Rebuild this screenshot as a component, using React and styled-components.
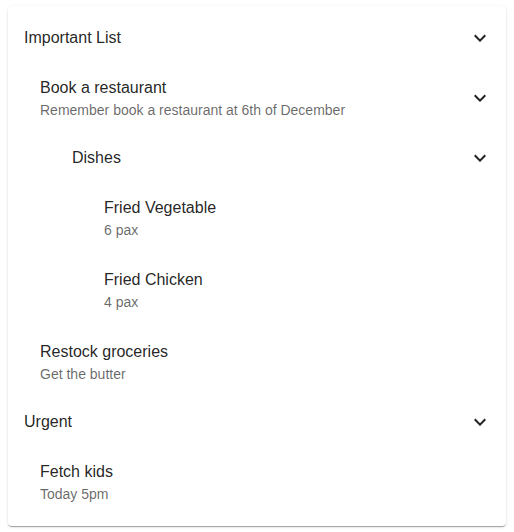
import styled, { createGlobalStyle } from "styled-components";

const GlobalStyle = createGlobalStyle`
  body {
    margin: 0;
    background: #fff;
    font-family: "Liberation Sans", Arial, sans-serif;
  }
`;

const Page = styled.div`
  padding: 6px 8px 6px;
`;

const Card = styled.div`
  background: #fff;
  border-radius: 4px;
  box-shadow: 0px 2px 1px -1px rgba(0, 0, 0, 0.2), 0px 1px 1px 0px rgba(0, 0, 0, 0.14),
    0px 1px 3px 0px rgba(0, 0, 0, 0.12);
`;

const List = styled.ul`
  list-style: none;
  margin: 0;
  padding: ${(p) => (p.$root ? "8px 0" : "0")};
`;

const Item = styled.li`
  display: flex;
  align-items: center;
  padding: 8px 16px 8px ${(p) => p.$indent}px;
  color: rgba(0, 0, 0, 0.87);
`;

const Texts = styled.div`
  flex: 1;
  margin: ${(p) => (p.$two ? "6px 0" : "4px 0")};
`;

const Primary = styled.div`
  font-size: 16px;
  line-height: 24px;
`;

const Secondary = styled.div`
  font-size: 14px;
  line-height: 20px;
  color: rgba(0, 0, 0, 0.6);
`;

const Chevron = styled.svg`
  width: 24px;
  height: 24px;
  margin-right: -2px;
  fill: rgba(0, 0, 0, 0.87);
  flex-shrink: 0;
`;

const data = [
  {
    title: "Important List",
    children: [
      {
        title: "Book a restaurant",
        sub: "Remember book a restaurant at 6th of December",
        children: [
          {
            title: "Dishes",
            children: [
              { title: "Fried Vegetable", sub: "6 pax" },
              { title: "Fried Chicken", sub: "4 pax" },
            ],
          },
        ],
      },
      { title: "Restock groceries", sub: "Get the butter" },
    ],
  },
  {
    title: "Urgent",
    children: [{ title: "Fetch kids", sub: "Today 5pm" }],
  },
];

const indents = [16, 32, 64, 96];

const Node = ({ node, depth }) => (
  <>
    <Item $indent={indents[depth]}>
      <Texts $two={!!node.sub}>
        <Primary>{node.title}</Primary>
        {node.sub && <Secondary>{node.sub}</Secondary>}
      </Texts>
      {node.children && (
        <Chevron viewBox="0 0 24 24">
          <path d="M16.59 8.59 12 13.17 7.41 8.59 6 10l6 6 6-6z" />
        </Chevron>
      )}
    </Item>
    {node.children && (
      <List>
        {node.children.map((c) => (
          <Node key={c.title} node={c} depth={depth + 1} />
        ))}
      </List>
    )}
  </>
);

const App = () => {
  return (
    <>
      <GlobalStyle />
      <Page>
        <Card>
          <List $root>
            {data.map((n) => (
              <Node key={n.title} node={n} depth={0} />
            ))}
          </List>
        </Card>
      </Page>
    </>
  );
};

export default App;
